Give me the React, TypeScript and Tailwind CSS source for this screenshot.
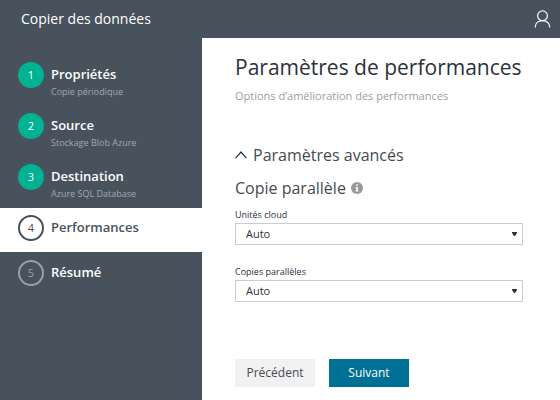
import React from "react";

type StepState = "done" | "current" | "pending";

interface Step {
  title: string;
  detail?: string;
  state: StepState;
}

const steps: Step[] = [
  { title: "Propriétés", detail: "Copie périodique", state: "done" },
  { title: "Source", detail: "Stockage Blob Azure", state: "done" },
  { title: "Destination", detail: "Azure SQL Database", state: "done" },
  { title: "Performances", state: "current" },
  { title: "Résumé", state: "pending" },
];

const badgeStyles: Record<StepState, string> = {
  done: "bg-[#00b294] text-white",
  current: "border-2 border-[#47525d] text-[#47525d]",
  pending: "border-2 border-[#9b9fa2] text-[#9b9fa2]",
};

const rowStyles: Record<StepState, string> = {
  done: "h-[51px] py-[7px] text-white",
  current: "h-11 bg-white py-[7px] text-[#47525d]",
  pending: "h-11 py-2 text-white",
};

function StepItem({ step, index }: { step: Step; index: number }) {
  return (
    <li
      aria-current={step.state === "current" ? "step" : undefined}
      className={`flex items-start gap-[7px] pl-[18px] ${rowStyles[step.state]}`}
    >
      <span
        className={`flex size-[26px] shrink-0 items-center justify-center rounded-full text-[11px] ${badgeStyles[step.state]}`}
      >
        {index + 1}
      </span>
      <div className="flex flex-col">
        <span className="text-[13px] font-semibold leading-6">{step.title}</span>
        {step.detail && (
          <span className="text-[9px] leading-3 text-[#a3a8ac]">{step.detail}</span>
        )}
      </div>
    </li>
  );
}

function SelectField({ id, label }: { id: string; label: string }) {
  return (
    <div className="flex flex-col">
      <label htmlFor={id} className="text-[9px] leading-4 text-[#2b323a]">
        {label}
      </label>
      <div className="relative">
        <select
          id={id}
          defaultValue="Auto"
          className="block h-[22px] w-full appearance-none border border-[#cccccc] bg-white pl-[10px] text-[11px] leading-5 text-[#2b323a]"
        >
          <option value="Auto">Auto</option>
        </select>
        <svg
          aria-hidden="true"
          viewBox="0 0 5 4"
          className="pointer-events-none absolute right-[6px] top-[9px] h-1 w-[5px]"
        >
          <path d="M0 0h5v1L3 4H2L0 1z" fill="#2b323a" />
        </svg>
      </div>
    </div>
  );
}

export default function App() {
  return (
    <div className="flex min-h-screen flex-col bg-white font-['Open_Sans','Noto_Sans',sans-serif] text-[#2b323a]">
      <header className="flex h-[38px] items-center justify-between bg-[#47525d] pl-[21px] pr-[9px] text-white">
        <span className="text-[14px] leading-5">Copier des données</span>
        <button type="button" aria-label="Compte">
          <svg viewBox="0 0 17 18" className="h-[18px] w-[17px]" fill="none" stroke="#f1f2f3" strokeWidth="1.3">
            <circle cx="8.5" cy="5.8" r="4.9" />
            <path d="M1.2 17.6c0-4.200 2.900-7 7.300-7s7.300 2.800 7.300 7" />
          </svg>
        </button>
      </header>

      <div className="flex grow">
        <aside className="w-[202px] shrink-0 bg-[#47525d] pt-[17px]">
          <ol>
            {steps.map((step, i) => (
              <StepItem key={step.title} step={step} index={i} />
            ))}
          </ol>
        </aside>

        <main className="flex min-w-0 grow flex-col pb-[13px] pl-[33px] pr-[37px] pt-[13px]">
          <h1 className="whitespace-nowrap text-[21px] leading-8">Paramètres de performances</h1>
          <p className="mt-[5px] text-[11px] leading-4 text-[#999ea2]">
            Options d’amélioration des performances
          </p>

          <button
            type="button"
            aria-expanded="true"
            className="mt-[39px] flex items-center gap-[6px] self-start text-[16px] leading-6 text-[#444b53]"
          >
            <svg viewBox="0 0 12 8" className="h-2 w-3" fill="none" stroke="#2b323a" strokeWidth="1.2">
              <path d="M.6 7.200 6 1l5.400 6.200" />
            </svg>
            Paramètres avancés
          </button>

          <div className="mt-[9px] flex items-center gap-[5px]">
            <h2 className="text-[16px] leading-6 text-[#444b53]">Copie parallèle</h2>
            <svg viewBox="0 0 12 12" className="size-3" role="img" aria-label="Information">
              <circle cx="6" cy="6" r="6" fill="#999999" />
              <path d="M5.200 2.200h1.600v1.600H5.200zM4.500 5h2.300v3.700h.7v.8h-3v-.8h.7V5.800h-.7z" fill="#fff" />
            </svg>
          </div>

          <div className="mt-[7px] flex flex-col gap-[19px]">
            <SelectField id="cloud-units" label="Unités cloud" />
            <SelectField id="parallel-copies" label="Copies parallèles" />
          </div>

          <div className="mt-auto flex gap-[14px]">
            <button type="button" className="h-7 w-20 bg-[#f1f1f1] text-[12px] leading-4 text-[#444b53]">
              Précédent
            </button>
            <button type="button" className="h-7 w-20 bg-[#007094] text-[12px] leading-4 text-white">
              Suivant
            </button>
          </div>
        </main>
      </div>
    </div>
  );
}
